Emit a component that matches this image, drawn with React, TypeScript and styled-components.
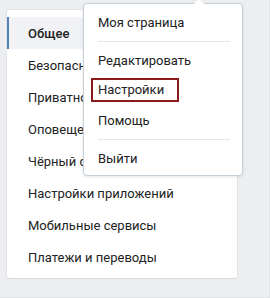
import React from 'react'
import styled, { createGlobalStyle } from 'styled-components'

const GlobalStyle = createGlobalStyle`
    html, body {
        margin: 0;
        padding: 0;
        background: #edeef0;
    }
    body {
        font-family: Roboto, 'Open Sans', 'Noto Sans', sans-serif;
        font-size: 13px;
        -webkit-font-smoothing: antialiased;
    }
`

const Page = styled.div`
    position: relative;
    width: 270px;
    height: 298px;
    box-sizing: border-box;
    padding: 10px 0 0 7px;
    border-right: 1px solid #e2e3e6;
    border-bottom: 1px solid #e2e3e6;
    overflow: hidden;
`

const Card = styled.div`
    width: 230px;
    height: 268px;
    box-sizing: border-box;
    background: #fff;
    border-radius: 2px;
    box-shadow: 0 1px 0 0 #d7d8db, 0 0 0 1px #e3e4e8;
    padding: 7px 0;
`

const MenuItem = styled.div<{ active?: boolean }>`
    height: 32px;
    display: flex;
    align-items: center;
    padding-left: 19px;
    border-left: 2px solid ${(p) => (p.active ? '#5181b8' : 'transparent')};
    background: ${(p) => (p.active ? '#f0f2f5' : 'transparent')};
    color: #222;
    font-weight: ${(p) => (p.active ? 500 : 400)};
    white-space: nowrap;
`

const Dropdown = styled.div`
    position: absolute;
    left: 83px;
    top: 3px;
    width: 160px;
    box-sizing: border-box;
    background: #fff;
    border: 1px solid #c5d0db;
    border-radius: 4px;
    box-shadow: 0 1px 3px rgba(0, 0, 0, 0.1);
    padding: 3px 0 2px;

    &::before {
        content: '';
        position: absolute;
        top: -5px;
        right: 38px;
        border: 5px solid transparent;
        border-top: 0;
        border-bottom-color: #fff;
    }
`

const DropItem = styled.div`
    height: 30px;
    display: flex;
    align-items: center;
    padding-left: 14px;
    color: #222;
`

const Separator = styled.div`
    height: 1px;
    margin: 4px 12px 3px 14px;
    background: #e7e8ec;
`

const Marked = styled.span`
    display: inline-block;
    margin-left: -7px;
    padding: 2px 13px 2px 5px;
    line-height: 16px;
    border: 2px solid #8b1a1a;
`

const sections = [
    'Общее',
    'Безопасность',
    'Приватность',
    'Оповещения',
    'Чёрный список',
    'Настройки приложений',
    'Мобильные сервисы',
    'Платежи и переводы',
]

const App: React.FC = () => {
    return (
        <Page>
            <GlobalStyle />
            <Card>
                {sections.map((s, i) => (
                    <MenuItem key={s} active={i === 0}>
                        {s}
                    </MenuItem>
                ))}
            </Card>
            <Dropdown>
                <DropItem>Моя страница</DropItem>
                <Separator />
                <DropItem>Редактировать</DropItem>
                <DropItem>
                    <Marked>Настройки</Marked>
                </DropItem>
                <DropItem>Помощь</DropItem>
                <Separator />
                <DropItem>Выйти</DropItem>
            </Dropdown>
        </Page>
    )
}

export default App
